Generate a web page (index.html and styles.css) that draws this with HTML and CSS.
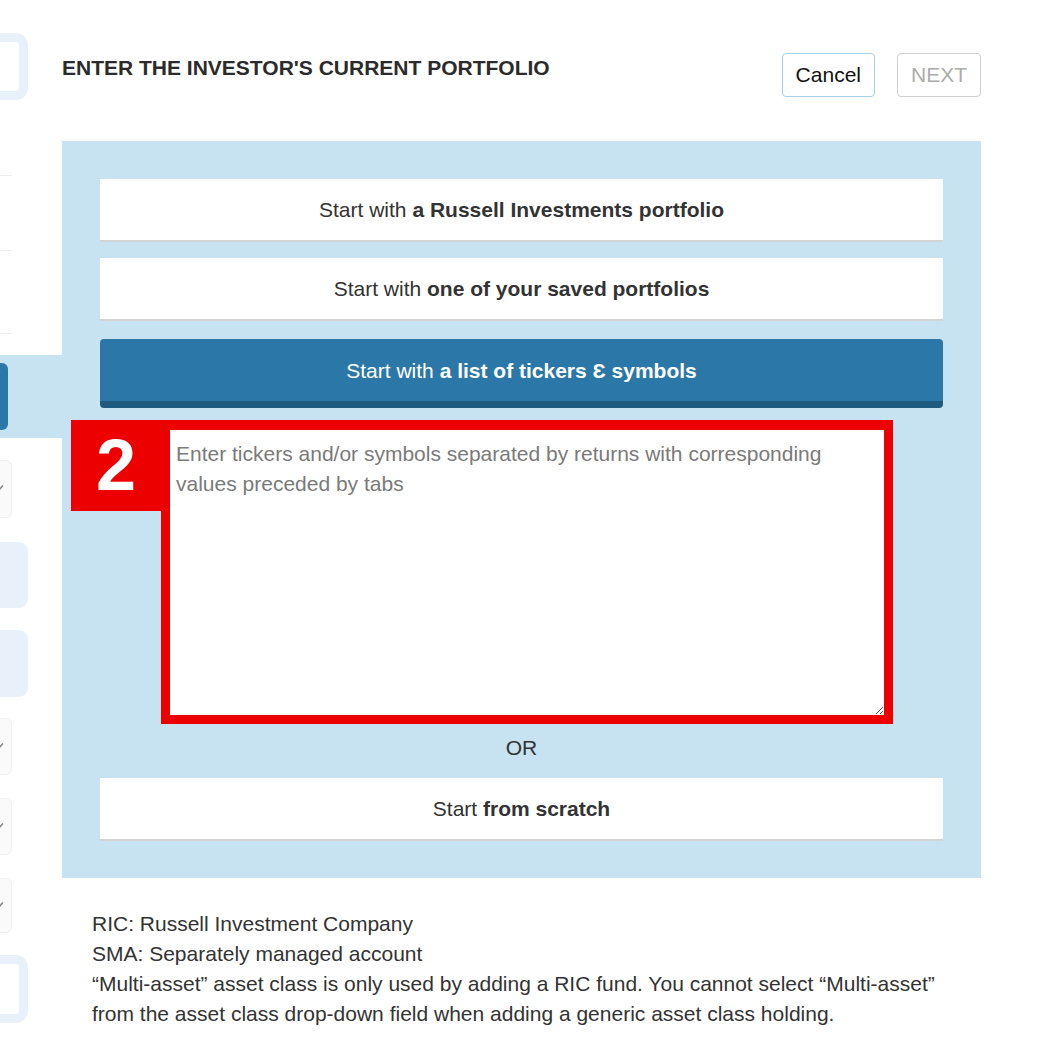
FILE: index.html
```html
<!DOCTYPE html>
<html lang="en">
<head>
  <meta charset="UTF-8" />
  <meta name="viewport" content="width=device-width, initial-scale=1.0"/>
  <title>Current Portfolio - Portfolio Builder</title>
  <link rel="stylesheet" href="styles.css">
</head>
<body>

<div class="page">

  <aside class="sidebar">
    <div class="side-card"></div>
    <div class="side-row first"></div>
    <div class="side-row second"></div>
    <div class="side-row third"></div>
    <div class="side-band">
      <div class="side-tab"></div>
    </div>
    <div class="side-check c1">
      <svg width="12" height="10" viewBox="0 0 12 10"><path d="M1 5 L4.5 8.5 L11 1.5" fill="none" stroke="#8a8a8a" stroke-width="1.6"/></svg>
    </div>
    <div class="side-box b1"></div>
    <div class="side-box b2"></div>
    <div class="side-check c2">
      <svg width="12" height="10" viewBox="0 0 12 10"><path d="M1 5 L4.5 8.5 L11 1.5" fill="none" stroke="#8a8a8a" stroke-width="1.6"/></svg>
    </div>
    <div class="side-check c3">
      <svg width="12" height="10" viewBox="0 0 12 10"><path d="M1 5 L4.5 8.5 L11 1.5" fill="none" stroke="#8a8a8a" stroke-width="1.6"/></svg>
    </div>
    <div class="side-check c4">
      <svg width="12" height="10" viewBox="0 0 12 10"><path d="M1 5 L4.5 8.5 L11 1.5" fill="none" stroke="#8a8a8a" stroke-width="1.6"/></svg>
    </div>
    <div class="side-card last"></div>
  </aside>

  <main class="main">
    <div class="top">
      <h1>ENTER THE INVESTOR'S CURRENT PORTFOLIO</h1>
      <div class="actions">
        <button type="button" class="btn-cancel">Cancel</button>
        <button type="button" class="btn-next" disabled>NEXT</button>
      </div>
    </div>

    <section class="panel">
      <button type="button" class="choice">Start with <b>a Russell Investments portfolio</b></button>
      <button type="button" class="choice">Start with <b>one of your saved portfolios</b></button>
      <button type="button" class="choice active">Start with <b>a list of tickers Ɛ symbols</b></button>

      <div class="callout">
        <span class="badge">2</span>
        <textarea id="tickers" placeholder="Enter tickers and/or symbols separated by returns with corresponding values preceded by tabs"></textarea>
      </div>

      <p class="or">OR</p>

      <button type="button" class="choice last">Start <b>from scratch</b></button>
    </section>

    <div class="notes">
      <p>RIC: Russell Investment Company</p>
      <p>SMA: Separately managed account</p>
      <p>“Multi-asset” asset class is only used by adding a RIC fund. You cannot select “Multi-asset” from the asset class drop-down field when adding a generic asset class holding.</p>
    </div>
  </main>

</div>

</body>
</html>
```

FILE: styles.css
```css
    * { box-sizing: border-box; margin: 0; padding: 0; }
    body {
      font-family: "Liberation Sans", Arial, sans-serif;
      background: #fff;
      color: #333;
      font-size: 21px;
      line-height: 24px;
    }

    .page {
      display: flex;
      align-items: flex-start;
    }

    /* left step list, mostly scrolled out of view */
    .sidebar {
      width: 62px;
      flex: none;
      overflow: hidden;
      padding-top: 33px;
      height: 1046px;
    }

    .side-card {
      width: 60px;
      height: 67px;
      margin-left: -32px;
      background: #fff;
      border: 9px solid #e8f1fa;
      border-radius: 12px;
    }

    .side-card.last {
      margin-top: 22px;
      height: 68px;
    }

    .side-row {
      width: 12px;
      border-top: 1px solid #ececec;
    }
    .side-row.first { margin-top: 75px; height: 75px; }
    .side-row.second { height: 83px; }
    .side-row.third { height: 22px; }

    .side-band {
      background: #c7e2f0;
      height: 83px;
      padding-top: 8px;
    }

    .side-tab {
      width: 8px;
      height: 67px;
      background: #2b78a8;
      border-radius: 0 6px 6px 0;
    }

    .side-check {
      width: 60px;
      margin-left: -48px;
      height: 57px;
      background: #fafafa;
      border: 1px solid #f0f0f0;
      border-radius: 6px;
      display: flex;
      align-items: center;
      padding-left: 39px;
    }
    .side-check.c1 { margin-top: 22px; height: 58px; }
    .side-check.c2 { margin-top: 21px; }
    .side-check.c3 { margin-top: 23px; }
    .side-check.c4 { margin-top: 23px; height: 55px; }

    .side-box {
      width: 60px;
      margin-left: -32px;
      height: 67px;
      background: #e8f1fa;
      border-radius: 9px;
    }
    .side-box.b1 { margin-top: 24px; height: 66px; }
    .side-box.b2 { margin-top: 22px; }

    /* main column */
    .main {
      width: 919px;
      flex: none;
    }

    .top {
      display: flex;
      justify-content: space-between;
      align-items: flex-start;
      height: 141px;
    }

    .top h1 {
      font-size: 21px;
      line-height: 24px;
      font-weight: 700;
      color: #2b2b2b;
      margin-top: 56px;
    }

    .actions {
      display: flex;
      gap: 22px;
      margin-top: 53px;
    }

    .actions button {
      font-family: inherit;
      font-size: 21px;
      line-height: 24px;
      padding: 9px 13px;
      background: #fff;
      border-radius: 4px;
      cursor: pointer;
    }

    .btn-cancel {
      border: 1px solid #a9cfe9;
      color: #111;
    }

    .btn-next {
      border: 1px solid #cfcfcf;
      color: #acacac;
    }

    .panel {
      background: #c7e2f0;
      padding: 38px 38px 39px;
    }

    .choice {
      display: block;
      width: 100%;
      height: 61px;
      margin-bottom: 18px;
      background: #fff;
      border: none;
      box-shadow: 0 2px 0 #d3d3d3;
      font-family: inherit;
      font-size: 21px;
      line-height: 24px;
      color: #333;
      text-align: center;
      cursor: pointer;
    }

    .choice b {
      font-weight: 700;
    }

    .choice.active {
      margin-top: 20px;
      height: 69px;
      margin-bottom: 12px;
      padding-top: 1px;
      background: #2b78a8;
      border-bottom: 7px solid #1f5a7f;
      border-radius: 4px;
      box-shadow: none;
      color: #fff;
    }

    .choice.last {
      margin-bottom: 0;
    }

    /* red annotation round the ticker box */
    .callout {
      position: relative;
      margin: 0 50px 0 61px;
      border: 9px solid #ec0000;
      border-top-width: 10px;
    }

    .badge {
      position: absolute;
      left: -99px;
      top: -10px;
      width: 90px;
      height: 91px;
      background: #ec0000;
      color: #fff;
      font-size: 72px;
      font-weight: 700;
      line-height: 91px;
      text-align: center;
    }

    textarea {
      display: block;
      width: 100%;
      height: 285px;
      border: none;
      outline: none;
      padding: 9px 6px 8px;
      font-family: inherit;
      font-size: 21px;
      line-height: 30px;
      color: #333;
      background: #fff;
    }

    textarea::placeholder {
      color: #7a7a7a;
    }

    .or {
      text-align: center;
      margin: 12px 0 18px;
      color: #333;
    }

    .notes {
      padding: 31px 0 0 30px;
      width: 910px;
      line-height: 30px;
      color: #333;
    }
```
